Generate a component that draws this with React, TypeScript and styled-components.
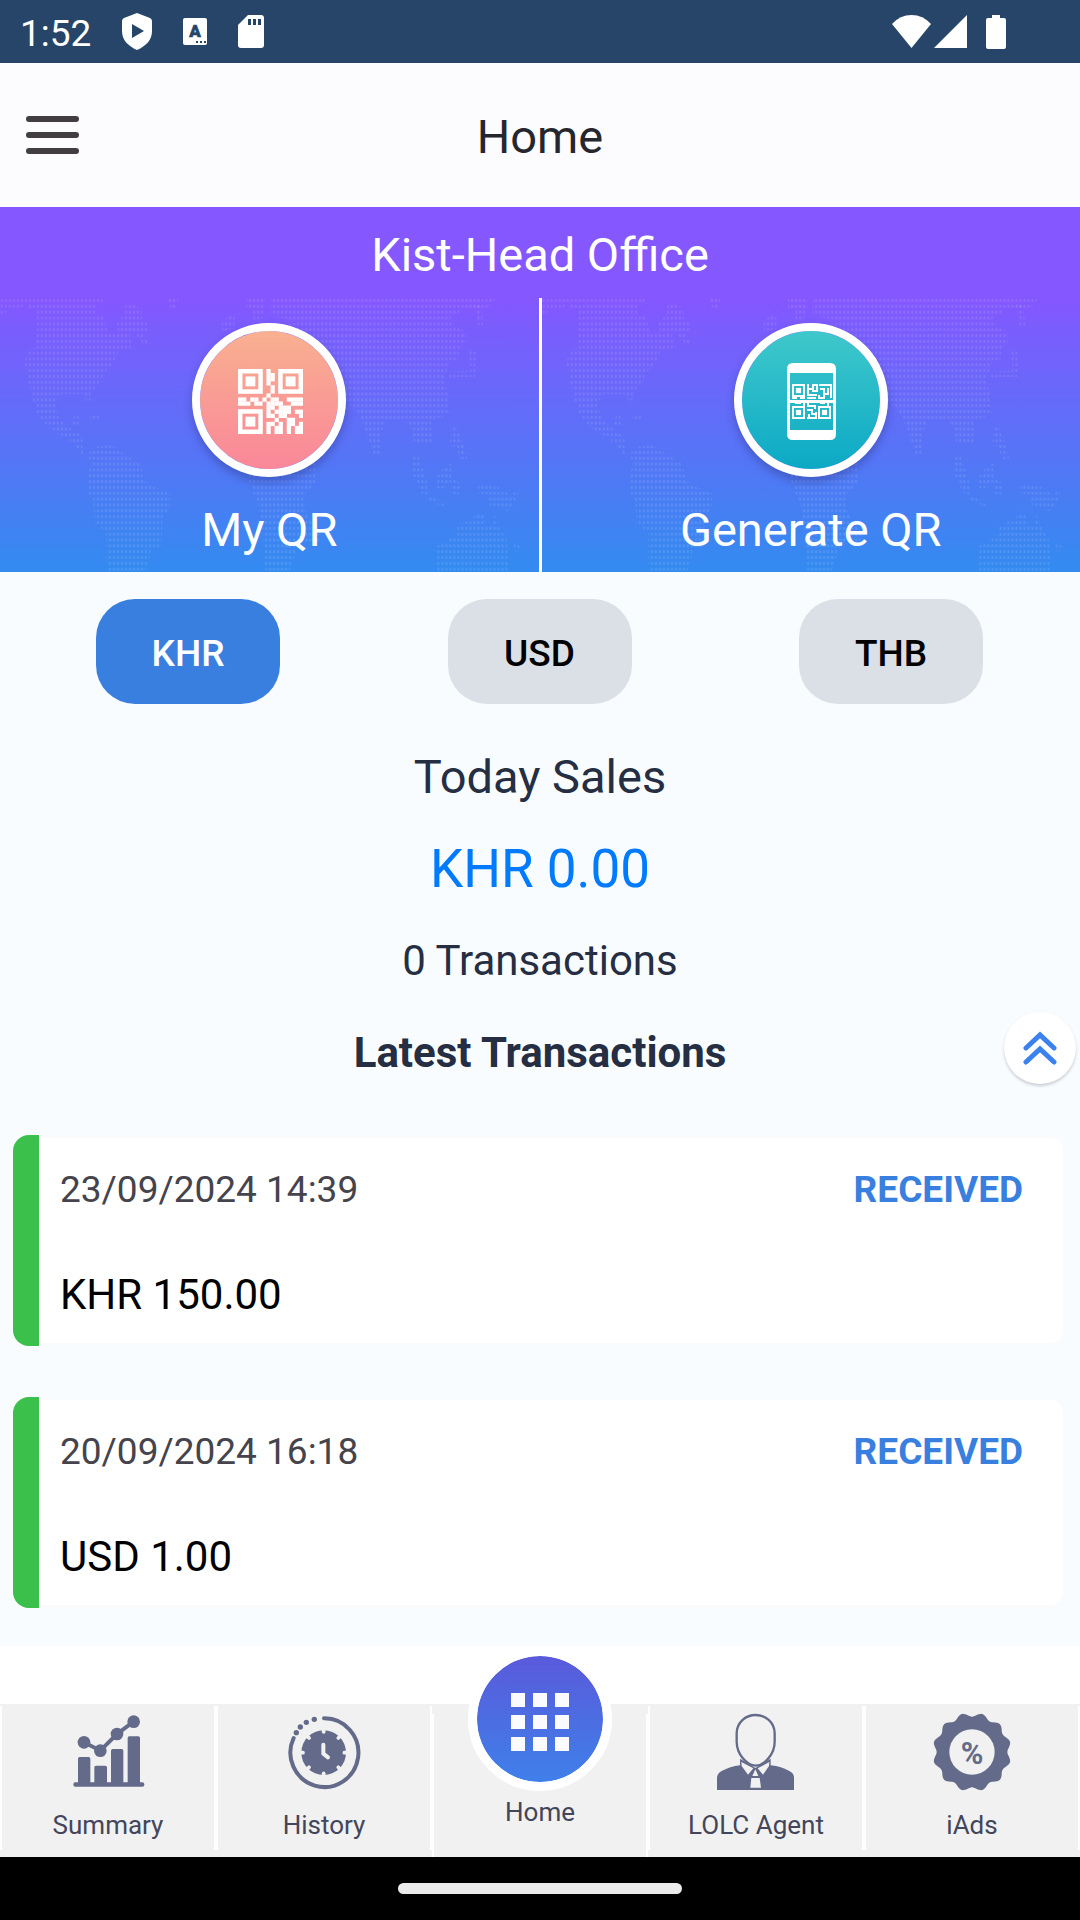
import React from "react";
import styled, { createGlobalStyle } from "styled-components";

const GlobalStyle = createGlobalStyle`
  * { box-sizing: border-box; }
  body {
    margin: 0;
    background: #f9fcff;
    font-family: Roboto, "Noto Sans", sans-serif;
  }
  button { font-family: inherit; border: 0; padding: 0; cursor: pointer; }
  h1, h2, h3, p { margin: 0; font-weight: 400; }
  svg { display: block; }
`;

const Screen = styled.div`
  display: flex;
  flex-direction: column;
  min-height: 100vh;
`;

const StatusBar = styled.div`
  display: flex;
  align-items: center;
  justify-content: space-between;
  height: 63px;
  padding: 0 74px 0 20px;
  background: #264569;
  color: #fff;
`;

const StatusGroup = styled.div<{ $gap: number }>`
  display: flex;
  align-items: center;
  gap: ${(p) => p.$gap}px;
`;

const Clock = styled.span`
  font-size: 37px;
  line-height: 44px;
  padding-top: 4px;
`;

const AppBar = styled.header`
  display: grid;
  grid-template-columns: 1fr auto 1fr;
  align-items: center;
  height: 144px;
  padding: 0 26px;
  background: #fcfcff;
`;

const MenuButton = styled.button`
  display: flex;
  flex-direction: column;
  gap: 10px;
  width: 53px;
  background: none;
`;

const MenuLine = styled.span`
  height: 6px;
  border-radius: 3px;
  background: #423d3f;
`;

const PageTitle = styled.h1`
  padding-top: 4px;
  font-size: 47px;
  line-height: 56px;
  color: #26262e;
`;

const Branch = styled.h2`
  padding-top: 5px;
  font-size: 47px;
  line-height: 86px;
  text-align: center;
  color: #fff;
  background: #8457ff;
`;

const QrPanel = styled.section`
  display: grid;
  grid-template-columns: 1fr 1fr;
  column-gap: 3px;
  background: #fff;
`;

const QrTile = styled.button`
  position: relative;
  display: flex;
  flex-direction: column;
  align-items: center;
  gap: 25px;
  padding: 25px 0 14px;
  overflow: hidden;
  background: linear-gradient(#8457ff, #338bf0);
`;

const MapLayer = styled.svg`
  position: absolute;
  inset: 0;
  width: 100%;
  height: 100%;
`;

const QrDisc = styled.span<{ $from: string; $to: string }>`
  position: relative;
  display: flex;
  align-items: center;
  justify-content: center;
  width: 154px;
  height: 154px;
  padding: 2px 0 0 2px;
  border: 8px solid #fff;
  border-radius: 50%;
  background: linear-gradient(${(p) => p.$from}, ${(p) => p.$to}) padding-box;
  box-shadow: 0 5px 9px rgba(40, 40, 110, 0.35);
`;

const QrLabel = styled.span`
  position: relative;
  font-size: 47px;
  line-height: 56px;
  color: #fff;
`;

const Main = styled.main`
  flex: 1;
  padding: 27px 0 38px;
  background: #f9fcff;
`;

const CurrencyRow = styled.div`
  display: flex;
  justify-content: space-between;
  padding: 0 97px 27px 96px;
`;

const CurrencyButton = styled.button<{ $active: boolean }>`
  width: 184px;
  height: 105px;
  padding-top: 4px;
  border-radius: 39px;
  font-size: 37px;
  font-weight: 500;
  color: ${(p) => (p.$active ? "#fff" : "#000")};
  background: ${(p) => (p.$active ? "#397fe0" : "#dbdfe6")};
`;

const SummaryLine = styled.p<{ $size: number; $accent?: boolean }>`
  font-size: ${(p) => p.$size}px;
  line-height: 92px;
  text-align: center;
  color: ${(p) => (p.$accent ? "#007bff" : "#252e42")};
`;

const LatestRow = styled.div`
  position: relative;
`;

const LatestTitle = styled.h3`
  font-size: 42px;
  font-weight: 700;
  line-height: 92px;
  text-align: center;
  color: #252e42;
`;

const ExpandButton = styled.button`
  position: absolute;
  top: 5px;
  right: 4px;
  display: grid;
  place-items: center;
  width: 72px;
  height: 72px;
  border-radius: 50%;
  background: #fff;
  box-shadow: 0 2px 3px rgba(60, 70, 90, 0.25);
`;

const TransactionList = styled.ul`
  display: flex;
  flex-direction: column;
  gap: 51px;
  margin: 0;
  padding: 36px 14px 0 13px;
  list-style: none;
`;

const Card = styled.li`
  display: flex;
`;

const CardAccent = styled.span`
  width: 26px;
  border-radius: 16px 0 0 16px;
  background: #3bc04b;
`;

const CardBody = styled.div`
  flex: 1;
  padding: 30px 40px 23px 21px;
  border: 3px solid #fafbfd;
  border-left: 0;
  border-radius: 0 16px 16px 0;
  background: #fff;
`;

const CardHead = styled.div`
  display: flex;
  justify-content: space-between;
  margin-bottom: 58px;
  font-size: 37px;
  line-height: 44px;
`;

const When = styled.time`
  color: #45444c;
`;

const Status = styled.strong`
  font-weight: 700;
  color: #397fe0;
`;

const Amount = styled.p`
  font-size: 42px;
  line-height: 50px;
  color: #000;
`;

const NavShell = styled.footer`
  padding-top: 58px;
  background: #fff;
`;

const NavBar = styled.nav`
  display: grid;
  grid-template-columns: repeat(5, 1fr);
  height: 153px;
  background: #f1f1f1;
`;

const NavItem = styled.a`
  display: flex;
  flex-direction: column;
  align-items: center;
  gap: 18px;
  height: 144px;
  margin-top: 2px;
  padding-top: 7px;
  border: solid #fff;
  border-width: 0 2px;
  font-size: 26px;
  line-height: 32px;
  color: #43465a;
  text-decoration: none;
`;

const HomeItem = styled(NavItem)`
  gap: 5px;
  height: 143px;
  margin-top: 10px;
  padding-top: 0;
`;

const HomeDisc = styled.span`
  display: grid;
  place-items: center;
  flex: none;
  width: 144px;
  height: 144px;
  margin-top: -67px;
  padding-top: 5px;
  border: 9px solid #fff;
  border-radius: 50%;
  background: linear-gradient(#5a5adb, #3f80ea) padding-box, #fff;
`;

const GestureBar = styled.div`
  display: grid;
  place-items: center;
  height: 63px;
  background: #000;
`;

const GesturePill = styled.span`
  width: 284px;
  height: 11px;
  border-radius: 6px;
  background: #ebebeb;
`;

/* ---------- drawings ---------- */

const landMasses = [
  // North and Central America
  "0,293 298,293 298,310 280,314 280,342 300,350 312,385 312,400 345,395 375,405 390,440 342,455 340,475 320,500 300,520 295,545 265,575 262,602 250,600 245,582 180,582 162,605 170,650 185,668 210,690 240,710 240,765 200,720 150,690 125,665 105,640 105,615 92,600 90,570 78,540 78,510 70,490 82,450 105,440 105,325 80,325 80,310 60,322 20,325 15,342 0,342",
  // Eastern Canada and Greenland
  "335,370 360,345 365,312 388,312 410,328 412,360 432,366 432,390 415,398 432,430 415,430 392,400 375,405 345,400",
  "482,293 520,293 505,325 495,325 490,310",
  // Caribbean
  "215,648 228,648 228,675 210,675 210,662",
  "262,648 290,648 290,660 262,660",
  // South America
  "245,768 280,740 320,735 352,755 410,795 415,840 445,860 492,880 492,925 472,950 468,1040 436,1055 432,1090 420,1117 310,1117 308,1000 275,970 270,905 252,870 255,830 265,780",
  // Europe and Asia
  "785,293 1440,293 1415,325 1350,325 1305,355 1322,380 1352,395 1352,425 1332,450 1330,475 1300,495 1290,540 1300,590 1305,645 1250,660 1256,735 1225,735 1195,720 1195,690 1175,660 1120,660 1105,700 1105,765 1085,765 1060,690 1040,640 1000,600 800,500 700,450 700,400 870,365 785,345",
  "714,293 770,293 770,325 758,358 735,358 735,325 714,325",
  "642,366 665,345 680,350 680,385 645,392",
  "1375,312 1395,312 1402,375 1385,375",
  "1360,450 1380,455 1380,530 1300,532 1300,515 1365,512",
  // South-east Asian islands
  "1198,770 1215,770 1240,850 1240,885 1222,880 1198,825",
  "1268,830 1290,800 1310,790 1310,830 1335,850 1330,885 1310,880 1308,845 1290,865 1268,865",
  "1310,680 1325,680 1345,735 1355,775 1335,780 1325,740 1305,735",
  "1385,850 1450,862 1480,885 1505,870 1500,900 1475,935 1420,915 1415,885 1390,880",
  "1245,890 1290,908 1290,920 1245,905",
  // Africa
  "720,700 925,700 915,850 885,880 885,930 900,960 930,1010 920,1035 870,1030 850,1080 840,1117 770,1117 762,1000 750,915 735,880 722,840",
  // Australia
  "1265,1040 1320,1010 1325,985 1350,965 1365,965 1380,945 1405,945 1410,975 1430,975 1435,945 1450,985 1475,1030 1475,1117 1268,1117",
  "1490,1030 1510,1040 1500,1060 1490,1050",
];

function WorldMap({ id }: { id: string }) {
  return (
    <MapLayer viewBox="0 293 1562 824" preserveAspectRatio="none" aria-hidden="true">
      <defs>
        <pattern id={id} x="0" y="293" width="11.62" height="17.57" patternUnits="userSpaceOnUse">
          <rect x="2" y="3" width="6" height="9" rx="2" fill="#fff" fillOpacity="0.11" />
        </pattern>
      </defs>
      {landMasses.map((points) => (
        <polygon key={points} points={points} fill={`url(#${id})`} />
      ))}
    </MapLayer>
  );
}

function Finder({ x, y, size, ring }: { x: number; y: number; size: number; ring: number }) {
  const core = size * 0.4;
  return (
    <g>
      <rect
        x={x + ring / 2}
        y={y + ring / 2}
        width={size - ring}
        height={size - ring}
        fill="none"
        stroke="#fff"
        strokeWidth={ring}
      />
      <rect x={x + (size - core) / 2} y={y + (size - core) / 2} width={core} height={core} fill="#fff" />
    </g>
  );
}

// Each string is one row of modules in the 16 x 16 code.
const qrModules = [
  ".......#........",
  ".......##.......",
  ".......##.......",
  ".......#........",
  "........#.......",
  "........#.......",
  ".......#........",
  "##.##.#.##..####",
  "###.##.####..###",
  ".......##.###...",
  ".......#.####.##",
  ".......##.##...#",
  ".........#..##..",
  ".......##.#.##.#",
  ".......#.##.#.##",
  ".......#.##.#.##",
];

function QrCodeIcon() {
  return (
    <svg width="65" height="65" viewBox="0 0 16 16" aria-hidden="true">
      <Finder x={0} y={0} size={6.1} ring={1.1} />
      <Finder x={9.9} y={0} size={6.1} ring={1.1} />
      <Finder x={0} y={9.9} size={6.1} ring={1.1} />
      {qrModules.flatMap((row, y) =>
        [...row].map((cell, x) =>
          cell === "#" ? <rect key={`${x}-${y}`} x={x} y={y} width="1.05" height="1.05" fill="#fff" /> : null
        )
      )}
    </svg>
  );
}

function PhoneQrIcon() {
  return (
    <svg width="49" height="77" viewBox="0 0 49 77" aria-hidden="true">
      <path
        fill="#fff"
        fillRule="evenodd"
        d="M6 0H43Q49 0 49 6V71Q49 77 43 77H6Q0 77 0 71V6Q0 0 6 0ZM3 10V67H46V10Z"
      />
      <Finder x={5} y={21} size={13} ring={2} />
      <Finder x={5} y={43} size={13} ring={2} />
      <Finder x={31} y={43} size={13} ring={2} />
      <path
        fill="none"
        stroke="#fff"
        strokeWidth="2"
        d="M21 21V32H30M21 26H26V22H30V28H25M32 22H44V35M33 26H37V30M41 25V31H37V35H32V32M5 35H10M13 35H18M20 35H29M8 40H14M17 40V43M21 40V43H28V46M33 40H38M41 40V43M20 47H25V51H29V55H20M22 51V55M29 49V51"
      />
      <rect x="0" y="37" width="49" height="3" fill="#fff" />
    </svg>
  );
}

const ink = "#646b8a";

function SummaryIcon() {
  return (
    <svg width="78" height="78" viewBox="207 219 234 234" fill={ink} aria-hidden="true">
      <rect x="220" y="427" width="213" height="13" rx="6" />
      <path d="M234 430V356q0-5 5-5h27q5 0 5 5V430ZM283 430V382q0-5 5-5h28q5 0 5 5V430ZM333 430V332q0-5 5-5h27q5 0 5 5V430ZM383 430V294q0-5 5-5h27q5 0 5 5V430Z" />
      <path d="M252 307L301 332L351 282L401 245" fill="none" stroke={ink} strokeWidth="12" />
      <circle cx="252" cy="307" r="19" />
      <circle cx="301" cy="332" r="19" />
      <circle cx="351" cy="282" r="19" />
      <circle cx="401" cy="245" r="19" />
    </svg>
  );
}

function HistoryIcon() {
  return (
    <svg width="78" height="78" viewBox="855 219 234 234" aria-hidden="true">
      <path
        d="M972 235A102 103 0 1 1 881 294"
        fill="none"
        stroke={ink}
        strokeWidth="12"
        strokeLinecap="round"
      />
      <g fill={ink}>
        <circle cx="889" cy="278" r="8" />
        <circle cx="901" cy="261" r="8" />
        <circle cx="919" cy="247" r="8" />
        <circle cx="943" cy="238" r="8" />
        <circle cx="971" cy="338" r="67" />
      </g>
      <g stroke="#f1f1f1" strokeLinecap="round">
        {[0, 45, 90, 135, 180, 225, 270, 315].map((a) => (
          <path key={a} d="M971 264V276" strokeWidth="11" transform={`rotate(${a} 971 338)`} />
        ))}
        <path d="M970 314V341L984 352" fill="none" strokeWidth="12" strokeLinejoin="round" />
      </g>
    </svg>
  );
}

function AgentIcon() {
  return (
    <svg width="78" height="78" viewBox="231 219 234 234" aria-hidden="true">
      <path
        fill={ink}
        d="M231 450V412Q232 400 245 393Q270 380 300 376V356L346 384L392 356V376Q425 380 448 393Q462 400 462 412V450Z"
      />
      <path
        fill="#f1f1f1"
        d="M304 366L340 385L324 404L305 378ZM388 366L353 385L369 404L387 378ZM346 388L355 408H337ZM334 414H359L363 443H331Z"
      />
      <path
        fill="#f1f1f1"
        stroke={ink}
        strokeWidth="7"
        d="M347 225C375 225 404 245 404 280V305C404 340 375 377 347 377S290 340 290 305V280C290 245 319 225 347 225Z"
      />
    </svg>
  );
}

const badgeOutline = Array.from({ length: 180 }, (_, i) => {
  const a = (i * 2 * Math.PI) / 180;
  const r = 112 + 6 * Math.cos(12 * (a - Math.PI / 12));
  return `${(996 + r * Math.sin(a)).toFixed(1)},${(336 - r * Math.cos(a)).toFixed(1)}`;
}).join(" ");

function AdsIcon() {
  return (
    <svg width="78" height="78" viewBox="879 219 234 234" aria-hidden="true">
      <polygon points={badgeOutline} fill={ink} />
      <circle cx="996" cy="336" r="68" fill="#f1f1f1" />
      <text x="996" y="373" textAnchor="middle" fontSize="92" fontWeight="700" fill={ink}>
        %
      </text>
    </svg>
  );
}

function GridIcon() {
  return (
    <svg width="58" height="58" viewBox="0 0 58 58" fill="#fafaff" aria-hidden="true">
      {[0, 22, 44].flatMap((y) =>
        [0, 22, 44].map((x) => <rect key={`${x}-${y}`} x={x} y={y} width="14" height="14" />)
      )}
    </svg>
  );
}

function StatusIcons() {
  return (
    <>
      <svg width="30" height="37" viewBox="0 0 30 37" aria-hidden="true">
        <path fill="#fff" d="M15 0L28 5Q30 6 30 8V18C30 27 24 33 15 37C6 33 0 27 0 18V8Q0 6 2 5Z" />
        <path fill="#264569" d="M10 11L22 18L10 25Z" />
      </svg>
      <svg width="24" height="27" viewBox="0 0 24 27" aria-hidden="true">
        <rect width="24" height="27" rx="2" fill="#fff" />
        <text
          x="12"
          y="19"
          textAnchor="middle"
          fontSize="17"
          fontWeight="900"
          fill="#264569"
          stroke="#264569"
          strokeWidth="0.6"
        >
          A
        </text>
        <path fill="#264569" d="M13 23h2v2h-2zM17 23h2v2h-2zM21 23h2v2h-2z" />
      </svg>
      <svg width="26" height="33" viewBox="0 0 26 33" aria-hidden="true">
        <path fill="#fff" d="M10 0H23Q26 0 26 3V30Q26 33 23 33H3Q0 33 0 30V10Z" />
        <path fill="#264569" d="M10 4h3v6h-3zM15 4h3v6h-3zM20 4h3v6h-3z" />
      </svg>
    </>
  );
}

/* ---------- screen ---------- */

const currencies = ["KHR", "USD", "THB"];

const transactions = [
  { when: "23/09/2024 14:39", status: "RECEIVED", amount: "KHR 150.00" },
  { when: "20/09/2024 16:18", status: "RECEIVED", amount: "USD 1.00" },
];

export default function App() {
  const [currency, setCurrency] = React.useState("KHR");

  return (
    <Screen>
      <GlobalStyle />
      <StatusBar>
        <StatusGroup $gap={31}>
          <Clock>1:52</Clock>
          <StatusIcons />
        </StatusGroup>
        <StatusGroup $gap={19}>
          <StatusGroup $gap={3}>
            <svg width="39" height="33" viewBox="0 0 39 33" aria-hidden="true">
              <path fill="#fff" d="M0 9Q8 0 19.500 0T39 9L19.500 33Z" />
            </svg>
            <svg width="33" height="33" viewBox="0 0 33 33" aria-hidden="true">
              <path fill="#fff" d="M33 0V33H0Z" />
            </svg>
          </StatusGroup>
          <svg width="20" height="34" viewBox="0 0 20 34" aria-hidden="true">
            <path fill="#fff" d="M6 0H14V3H18Q20 3 20 5V32Q20 34 18 34H2Q0 34 0 32V5Q0 3 2 3H6Z" />
          </svg>
        </StatusGroup>
      </StatusBar>

      <AppBar>
        <MenuButton aria-label="Menu">
          <MenuLine />
          <MenuLine />
          <MenuLine />
        </MenuButton>
        <PageTitle>Home</PageTitle>
      </AppBar>

      <Branch>Kist-Head Office</Branch>
      <QrPanel>
        <QrTile>
          <WorldMap id="dots-my" />
          <QrDisc $from="#f9b090" $to="#fa8799">
            <QrCodeIcon />
          </QrDisc>
          <QrLabel>My QR</QrLabel>
        </QrTile>
        <QrTile>
          <WorldMap id="dots-generate" />
          <QrDisc $from="#3fc8cb" $to="#0ca9c5">
            <PhoneQrIcon />
          </QrDisc>
          <QrLabel>Generate QR</QrLabel>
        </QrTile>
      </QrPanel>

      <Main>
        <CurrencyRow>
          {currencies.map((c) => (
            <CurrencyButton
              key={c}
              $active={c === currency}
              aria-pressed={c === currency}
              onClick={() => setCurrency(c)}
            >
              {c}
            </CurrencyButton>
          ))}
        </CurrencyRow>

        <SummaryLine $size={47}>Today Sales</SummaryLine>
        <SummaryLine $size={53} $accent>
          {currency} 0.00
        </SummaryLine>
        <SummaryLine $size={42}>0 Transactions</SummaryLine>

        <LatestRow>
          <LatestTitle>Latest Transactions</LatestTitle>
          <ExpandButton aria-label="Expand transactions">
            <svg width="34" height="34" viewBox="0 0 34 34" aria-hidden="true">
              <path
                d="M3 17L17 4L31 17M3 31L17 18L31 31"
                fill="none"
                stroke="#3c82ee"
                strokeWidth="5"
                strokeLinecap="round"
              />
            </svg>
          </ExpandButton>
        </LatestRow>

        <TransactionList>
          {transactions.map((t) => (
            <Card key={t.when}>
              <CardAccent />
              <CardBody>
                <CardHead>
                  <When>{t.when}</When>
                  <Status>{t.status}</Status>
                </CardHead>
                <Amount>{t.amount}</Amount>
              </CardBody>
            </Card>
          ))}
        </TransactionList>
      </Main>

      <NavShell>
        <NavBar>
          <NavItem href="#summary">
            <SummaryIcon />
            Summary
          </NavItem>
          <NavItem href="#history">
            <HistoryIcon />
            History
          </NavItem>
          <HomeItem href="#home" aria-current="page">
            <HomeDisc>
              <GridIcon />
            </HomeDisc>
            Home
          </HomeItem>
          <NavItem href="#agent">
            <AgentIcon />
            LOLC Agent
          </NavItem>
          <NavItem href="#iads">
            <AdsIcon />
            iAds
          </NavItem>
        </NavBar>
        <GestureBar>
          <GesturePill />
        </GestureBar>
      </NavShell>
    </Screen>
  );
}
